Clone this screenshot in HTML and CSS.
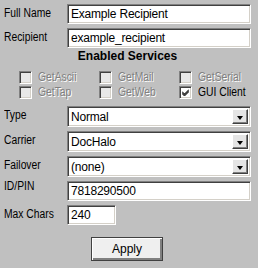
FILE: index.html
```
<!DOCTYPE html>
<html>
  <head>
    <title>Recipient</title>
    <link rel="stylesheet" href="styles.css">
  </head>
  <body>
    <div class="form">
      <div class="row row-text">
        <span class="label">Full Name</span>
        <span class="field">Example Recipient</span>
      </div>
      <div class="row row-text">
        <span class="label">Recipient</span>
        <span class="field">example_recipient</span>
      </div>

      <h2 class="heading">Enabled Services</h2>

      <!-- services, only the gui one is on -->
      <div class="services">
        <div class="service disabled"><span class="box"></span><span class="name">GetAscii</span></div>
        <div class="service disabled"><span class="box"></span><span class="name">GetMail</span></div>
        <div class="service disabled"><span class="box"></span><span class="name">GetSerial</span></div>
        <div class="service disabled"><span class="box"></span><span class="name">GetTap</span></div>
        <div class="service disabled"><span class="box"></span><span class="name">GetWeb</span></div>
        <div class="service">
          <span class="box checked">
            <svg width="7" height="7" viewBox="0 0 7 7"><path d="M0 2.5 L2.5 5 L7 0.5 M0 3.5 L2.5 6 L7 1.5 M0 4.5 L2.5 7 L7 2.5" stroke="#000" stroke-width="1" fill="none"/></svg>
          </span><span class="name">GUI Client</span>
        </div>
      </div>

      <div class="row row-select">
        <span class="label">Type</span>
        <span class="field select">Normal<span class="drop"></span></span>
      </div>
      <div class="row row-select">
        <span class="label">Carrier</span>
        <span class="field select">DocHalo<span class="drop"></span></span>
      </div>
      <div class="row row-select">
        <span class="label">Failover</span>
        <span class="field select">(none)<span class="drop"></span></span>
      </div>
      <div class="row row-text">
        <span class="label label-high">ID/PIN</span>
        <span class="field">7818290500</span>
      </div>
      <div class="row row-text">
        <span class="label">Max Chars</span>
        <span class="field short">240</span>
      </div>

      <div class="actions">
        <button class="button">Apply</button>
      </div>
    </div>
  </body>
</html>
```

FILE: styles.css
```
body {
  margin: 0;
  background-color: #c0c0c0;
  font-family: "Liberation Sans", Arial, sans-serif;
  font-size: 12px;
  color: #000000;
}

.form {
  padding: 4px 7px 0 4px;
}

.row {
  display: grid;
  grid-template-columns: 63px 184px;
  grid-template-rows: 100%;
  align-items: center;
  margin-bottom: 4px;
}

.row-text {
  height: 20px;
}

.row-select {
  height: 21px;
}

/* the labels use a narrow face, squeeze arial to match */
.label,
.name {
  display: inline-block;
  white-space: nowrap;
  transform: scaleX(0.86);
  transform-origin: left center;
}

.label {
  margin-bottom: 3px;
  line-height: 14px;
}

.label-high {
  margin-bottom: 10px;
}

.field {
  box-sizing: border-box;
  height: 100%;
  display: flex;
  align-items: center;
  padding-left: 3px;
  background-color: #ffffff;
  border: 1px solid;
  border-color: #808080 #ffffff #ffffff #808080;
  box-shadow: inset 1px 1px #404040, inset -1px -1px #d4d0c8;
  letter-spacing: -0.2px;
}

.short {
  width: 49px;
}

.select {
  position: relative;
}

.drop {
  position: absolute;
  right: 2px;
  top: 2px;
  bottom: 2px;
  width: 16px;
  box-sizing: border-box;
  background-color: #e4e4e4;
  border: 1px solid;
  border-color: #ffffff #404040 #404040 #ffffff;
  box-shadow: inset -1px -1px #808080;
}

.drop::after {
  content: "";
  position: absolute;
  left: 4px;
  top: 6px;
  border-left: 3.5px solid transparent;
  border-right: 3.5px solid transparent;
  border-top: 4px solid #000000;
}

.heading {
  margin: -4px 0 0 0;
  height: 16px;
  font-size: 12px;
  line-height: 16px;
  text-align: center;
}

.services {
  display: grid;
  grid-template-columns: 80px 80px 80px;
  row-gap: 2px;
  margin: 7px 0 7px 15px;
}

.service {
  display: flex;
  align-items: center;
  height: 13px;
  line-height: 13px;
}

.service.disabled {
  color: #808080;
  text-shadow: 1px 1px #ffffff;
}

.box {
  box-sizing: border-box;
  flex: none;
  width: 13px;
  height: 13px;
  margin-right: 6px;
  display: flex;
  align-items: center;
  justify-content: center;
  background-color: #e8e8e8;
  border: 1px solid;
  border-color: #808080 #ffffff #ffffff #808080;
  box-shadow: inset 1px 1px #404040, inset -1px -1px #d4d0c8;
}

.box.checked {
  background-color: #ffffff;
}

.actions {
  display: flex;
  padding-left: 87px;
  margin-top: 12px;
}

.button {
  width: 72px;
  height: 24px;
  background-color: #efefef;
  border: 1px solid #404040;
  box-shadow: inset 1px 1px #ffffff, inset -2px -2px #808080;
  font-family: "Liberation Sans", Arial, sans-serif;
  font-size: 12px;
  color: #000000;
}
```
